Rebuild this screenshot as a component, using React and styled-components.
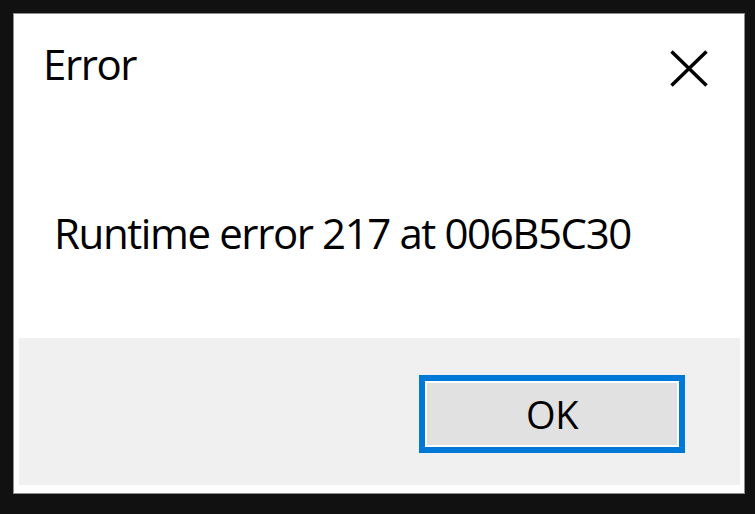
import React from "react";
import styled, { createGlobalStyle } from "styled-components";

const Global = createGlobalStyle`
  html, body { margin: 0; padding: 0; background: #111111; }
  body { width: 755px; height: 514px; overflow: hidden; font-family: "Open Sans", "Noto Sans", sans-serif; }
  #root { padding: 13px 10px 0 13px; }
`;

const Dialog = styled.div`
  width: 732px;
  height: 481px;
  box-sizing: border-box;
  border: 1px solid #8c8c8c;
  background: #ffffff;
  display: flex;
  flex-direction: column;
`;

const Top = styled.div`
  height: 324px;
  display: flex;
  flex-direction: column;
`;

const TitleBar = styled.div`
  display: flex;
  justify-content: space-between;
  align-items: flex-start;
  padding: 29px 36px 0 29px;
`;

const Text = styled.div`
  font-size: 42px;
  line-height: 42px;
  letter-spacing: -1.4px;
  font-variant-ligatures: none;
  color: #000;
`;

const Title = styled(Text)``;

const Close = styled.svg`
  width: 38px;
  height: 37px;
  margin-top: 7px;
`;

const Message = styled(Text)`
  padding: 125px 0 0 40px;
`;

const Footer = styled.div`
  height: 147px;
  margin: 0 4px 8px 5px;
  background: #f0f0f0;
  display: flex;
  justify-content: flex-end;
  align-items: flex-start;
  padding: 37px 55px 0 0;
  box-sizing: border-box;
`;

const Button = styled.button`
  width: 266px;
  height: 78px;
  box-sizing: border-box;
  border: 6px solid #0078d7;
  box-shadow: inset 0 0 0 2px #ffffff;
  background: #e1e1e1;
  font-family: "Open Sans", "Noto Sans", sans-serif;
  font-size: 38px;
  letter-spacing: -0.5px;
  color: #000;
  padding: 0;
  display: flex;
  align-items: center;
  justify-content: center;
`;

export default function App() {
  return (
    <>
      <Global />
      <Dialog>
        <Top>
          <TitleBar>
            <Title>Error</Title>
            <Close viewBox="0 0 38 37">
              <path d="M1.5 1.5 L36.5 35.5 M36.5 1.5 L1.5 35.5" stroke="#000" strokeWidth="3.5" fill="none" />
            </Close>
          </TitleBar>
          <Message>Runtime error 217 at 006B5C30</Message>
        </Top>
        <Footer>
          <Button>OK</Button>
        </Footer>
      </Dialog>
    </>
  );
}
